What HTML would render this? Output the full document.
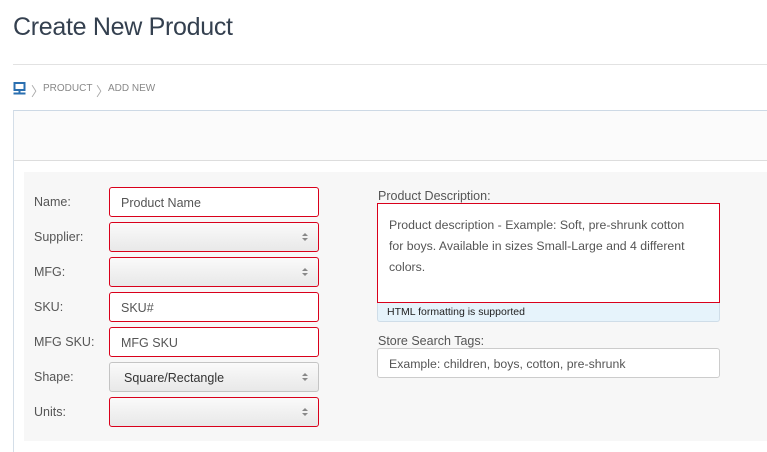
<!DOCTYPE html>
<html><head><meta charset="utf-8"><style>
*{box-sizing:border-box;margin:0;padding:0}
body{width:767px;height:452px;background:#fff;font-family:"Liberation Sans",sans-serif;position:relative;overflow:hidden;color:#555}
.a{position:absolute}
h1{position:absolute;left:13px;top:13px;font-weight:normal;font-size:25px;color:#34404f;letter-spacing:-0.3px}
.lbl{position:absolute;left:34px;font-size:12.5px;color:#555}
.in{position:absolute;left:109px;width:210px;height:30px;border:1px solid #d9001b;border-radius:3px;background:#fff;font-size:12.5px;color:#555;padding:8px 0 0 11px}
.sel{background:linear-gradient(#fafafa,#e8e8e8)}
.sel:after{content:"";position:absolute;right:10px;top:10px;width:0;height:0;border-left:3px solid transparent;border-right:3px solid transparent;border-bottom:3px solid #888}
.sel:before{content:"";position:absolute;right:10px;top:15px;width:0;height:0;border-left:3px solid transparent;border-right:3px solid transparent;border-top:3px solid #888}
</style></head><body>
<h1>Create New Product</h1>
<div class="a" style="left:13px;top:64px;width:754px;height:1px;background:#e2e2e2"></div>
<svg class="a" style="left:13px;top:82px" width="13" height="13" viewBox="0 0 13 13"><rect x="1.5" y="1" width="10" height="7" fill="none" stroke="#2a6fb0" stroke-width="2"/><rect x="5.5" y="8" width="2" height="2.5" fill="#2a6fb0"/><rect x="0.5" y="10.5" width="12" height="2" fill="#2a6fb0"/></svg>
<div class="a" style="left:31px;top:81px;font-size:13px;color:#aaa">〉</div>
<div class="a" style="left:43px;top:83px;font-size:10px;color:#888">PRODUCT</div>
<div class="a" style="left:96px;top:81px;font-size:13px;color:#aaa">〉</div>
<div class="a" style="left:108px;top:83px;font-size:10px;color:#888">ADD NEW</div>
<div class="a" style="left:13px;top:110px;width:754px;height:342px;border-left:1px solid #d4dee8;border-top:1px solid #cdd9e5;background:#fff"></div>
<div class="a" style="left:14px;top:111px;width:753px;height:50px;background:#fbfbfb;border-bottom:1px solid #ddd"></div>
<div class="a" style="left:24px;top:172px;width:743px;height:269px;background:#f7f7f7"></div>

<div class="lbl" style="top:195px">Name:</div>
<div class="in" style="top:187px">Product Name</div>
<div class="lbl" style="top:230px">Supplier:</div>
<div class="in sel" style="top:222px"></div>
<div class="lbl" style="top:265px">MFG:</div>
<div class="in sel" style="top:257px"></div>
<div class="lbl" style="top:300px">SKU:</div>
<div class="in" style="top:292px">SKU#</div>
<div class="lbl" style="top:335px">MFG SKU:</div>
<div class="in" style="top:327px">MFG SKU</div>
<div class="lbl" style="top:370px">Shape:</div>
<div class="in sel" style="top:362px;border-color:#c4c4c4;color:#333;padding-left:14px">Square/Rectangle</div>
<div class="lbl" style="top:405px">Units:</div>
<div class="in sel" style="top:397px"></div>

<div class="a" style="left:378px;top:189px;font-size:12.5px;color:#555">Product Description:</div>
<div class="a" style="left:377px;top:203px;width:343px;height:100px;border:1px solid #d9001b;background:#fff;font-size:12.3px;line-height:21px;color:#555;padding:11px 30px 0 11px">Product description - Example: Soft, pre-shrunk cotton for boys. Available in sizes Small-Large and 4 different colors.</div>
<div class="a" style="left:377px;top:303px;width:343px;height:19px;background:#e6f3fb;border:1px solid #cfdde8;border-top:none;border-radius:0 0 3px 3px;font-size:10.5px;color:#222;padding:3px 0 0 9px">HTML formatting is supported</div>
<div class="a" style="left:378px;top:334px;font-size:12.5px;color:#555">Store Search Tags:</div>
<div class="a" style="left:377px;top:348px;width:343px;height:30px;border:1px solid #ccc;border-radius:3px;background:#fff;font-size:12.3px;color:#555;padding:8px 0 0 11px">Example: children, boys, cotton, pre-shrunk</div>
</body></html>
